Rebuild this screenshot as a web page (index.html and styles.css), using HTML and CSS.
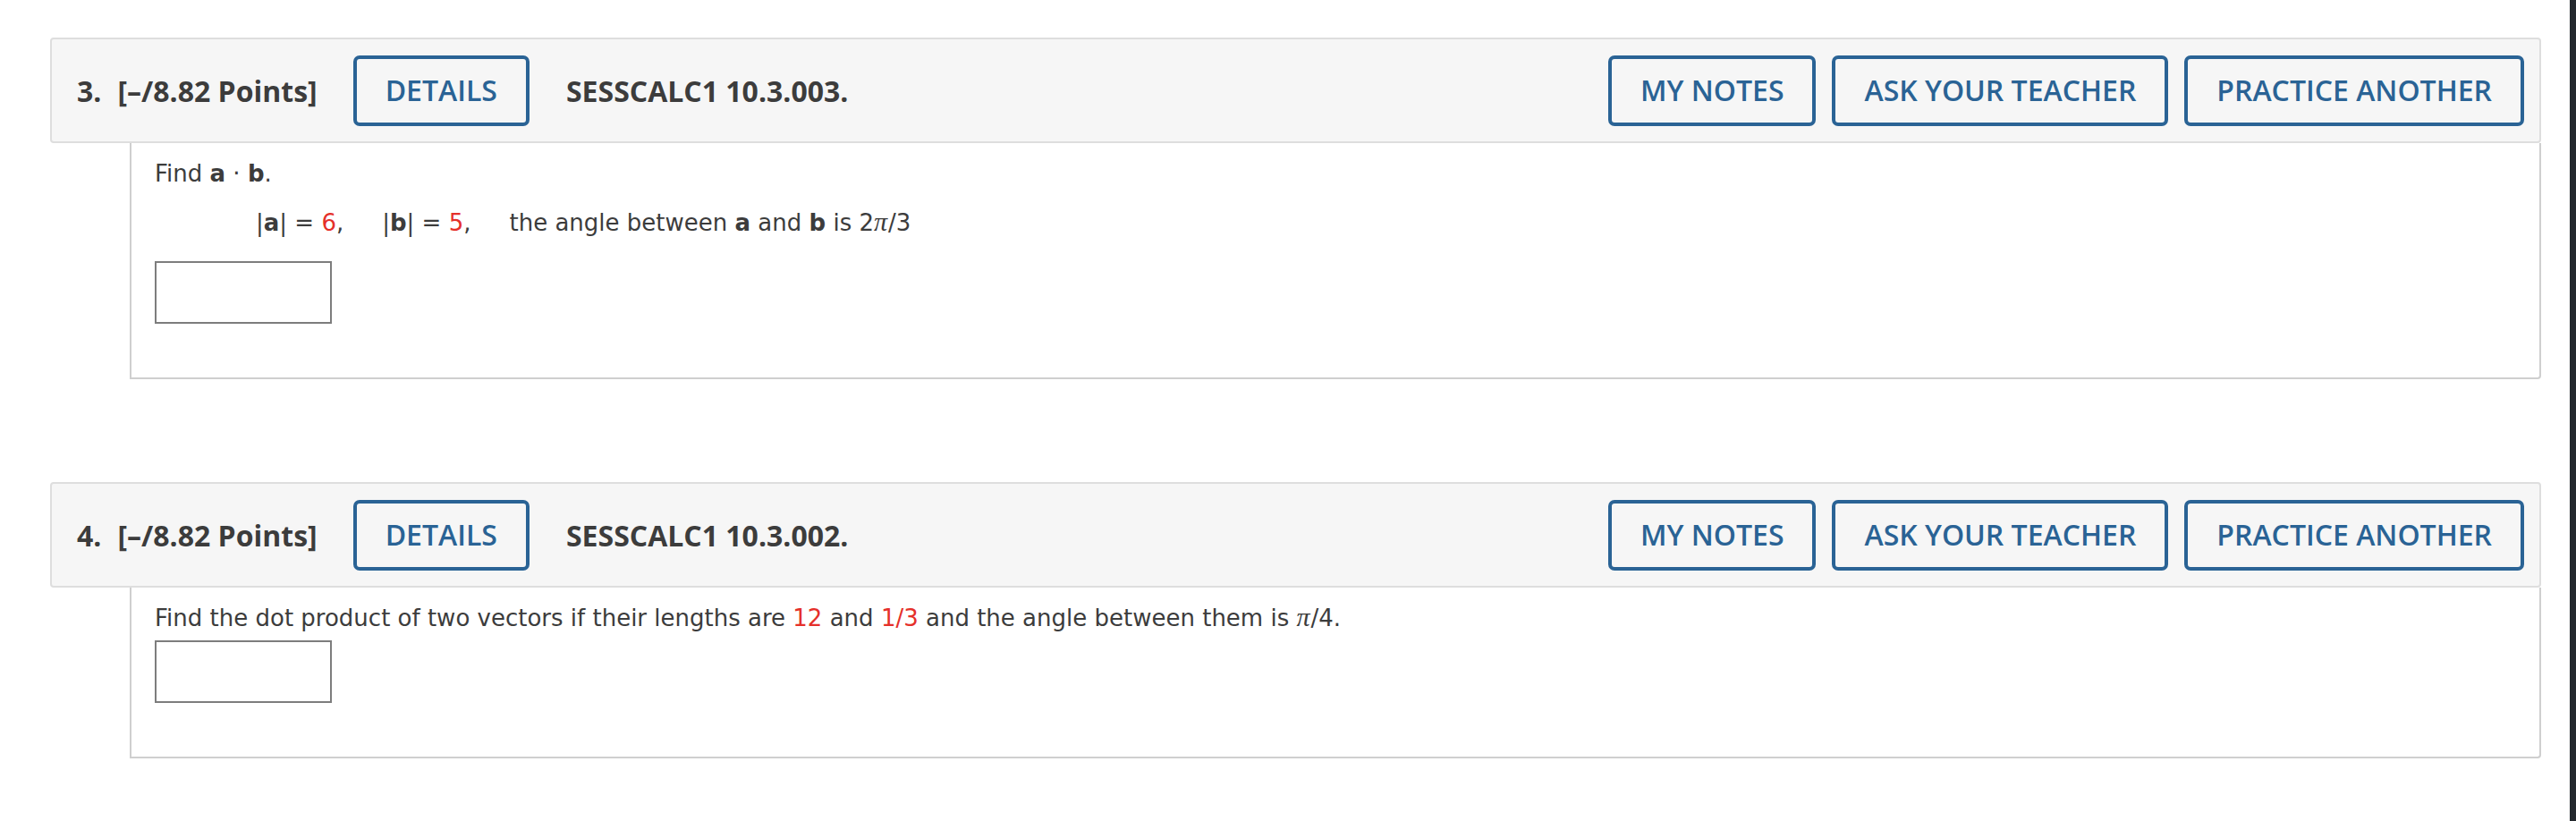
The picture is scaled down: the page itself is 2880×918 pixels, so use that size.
FILE: index.html
```html
<!DOCTYPE html>
<html lang="en">
<head>
<meta charset="utf-8">
<title>Questions</title>
<link rel="stylesheet" href="styles.css">
</head>
<body>
<div class="page">
  <main class="content">
    <section class="question">
      <header class="q-head">
        <span class="q-num">3.</span>
        <span class="q-points">[–/8.82 Points]</span>
        <button class="btn btn-details" type="button">DETAILS</button>
        <span class="q-code">SESSCALC1 10.3.003.</span>
        <div class="q-actions">
          <button class="btn" type="button">MY NOTES</button>
          <button class="btn" type="button">ASK YOUR TEACHER</button>
          <button class="btn" type="button">PRACTICE ANOTHER</button>
        </div>
      </header>
      <div class="q-body">
        <p class="q-text">Find <b>a</b> · <b>b</b>.</p>
        <p class="q-given"><span class="term">|<b>a</b>| = <span class="num">6</span>,</span><span class="term">|<b>b</b>| = <span class="num">5</span>,</span><span class="term">the angle between <b>a</b> and <b>b</b> is 2<i class="pi">π</i>/3</span></p>
        <input class="answer" type="text" aria-label="answer">
      </div>
    </section>

    <section class="question">
      <header class="q-head">
        <span class="q-num">4.</span>
        <span class="q-points">[–/8.82 Points]</span>
        <button class="btn btn-details" type="button">DETAILS</button>
        <span class="q-code">SESSCALC1 10.3.002.</span>
        <div class="q-actions">
          <button class="btn" type="button">MY NOTES</button>
          <button class="btn" type="button">ASK YOUR TEACHER</button>
          <button class="btn" type="button">PRACTICE ANOTHER</button>
        </div>
      </header>
      <div class="q-body">
        <p class="q-text q-text-single">Find the dot product of two vectors if their lengths are <span class="num">12</span> and <span class="num">1/3</span> and the angle between them is <i class="pi">π</i>/4.</p>
        <input class="answer" type="text" aria-label="answer">
      </div>
    </section>
  </main>
  <div class="edge"></div>
</div>
</body>
</html>
```

FILE: styles.css
```css
* {
  box-sizing: border-box;
}

html, body {
  margin: 0;
  padding: 0;
  background: #ffffff;
}

.page {
  display: flex;
  min-height: 918px;
}

.content {
  flex: 1;
  padding: 42px 32px 0 56px;
}

.edge {
  width: 7px;
  flex: none;
  background: #24292e;
}

.question + .question {
  margin-top: 115px;
}

.q-head {
  display: flex;
  align-items: center;
  height: 118px;
  padding: 0 17px 0 28px;
  background: #f6f6f6;
  border: 2px solid #dedede;
  border-radius: 4px;
  font-family: "Open Sans", "Liberation Sans", sans-serif;
  font-size: 32px;
  font-weight: 700;
  color: #3c3c3c;
}

.q-num {
  margin-right: 18px;
}

.q-points {
  margin-right: 40px;
}

.q-code {
  margin-left: 41px;
}

.q-actions {
  display: flex;
  gap: 18px;
  margin-left: auto;
}

.btn {
  display: inline-flex;
  align-items: center;
  justify-content: center;
  height: 79px;
  padding: 0 32px;
  background: #f6f6f6;
  border: 4px solid #2a6395;
  border-radius: 7px;
  font-family: "Open Sans", "Liberation Sans", sans-serif;
  font-size: 32px;
  font-weight: 600;
  color: #2a6395;
  line-height: 1;
  margin: 0;
}

.q-body {
  margin-left: 89px;
  padding: 19px 26px 60px 26px;
  background: #ffffff;
  border-left: 2px solid #cfcfcf;
  border-right: 2px solid #cfcfcf;
  border-bottom: 2px solid #cfcfcf;
  border-radius: 0 0 4px 0;
  font-family: "DejaVu Sans", Verdana, sans-serif;
  font-size: 26px;
  line-height: 30px;
  color: #3c3c3c;
}

.q-text {
  margin: 0;
}

.q-given {
  margin: 25px 0 0 0;
  padding-left: 113px;
}

.term + .term {
  margin-left: 43px;
}

.num {
  color: #e5302a;
}

.pi {
  font-family: "Liberation Serif", "Times New Roman", serif;
  font-style: italic;
  font-size: 30px;
  line-height: 0;
  padding-right: 1px;
}

.answer {
  display: block;
  width: 198px;
  height: 70px;
  margin: 28px 0 0 0;
  padding: 0;
  border: 2px solid #7d7d7d;
  background: #ffffff;
}

.q-text-single + .answer {
  margin-top: 10px;
}
```
